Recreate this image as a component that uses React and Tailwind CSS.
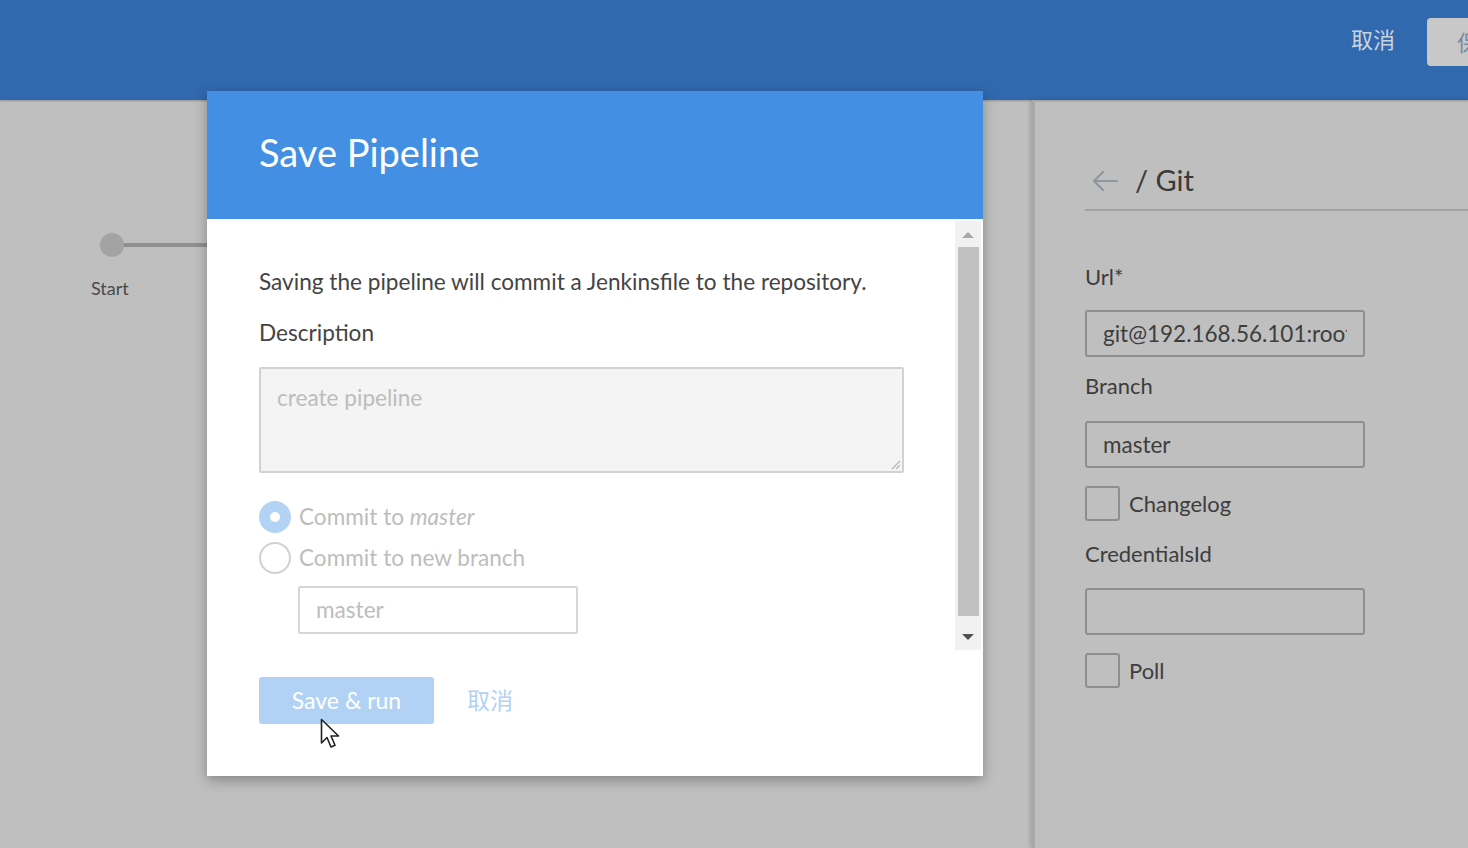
import React from 'react';

function Checkbox({ label }) {
  return (
    <label className="flex items-center gap-[9px]">
      <span className="h-[35px] w-[35px] rounded-[3px] border-2 border-[#8e8e8e]" />
      <span className="text-[22px] text-[#3d3d3d]">{label}</span>
    </label>
  );
}

function Field({ value }) {
  return (
    <div className="flex h-[47px] w-[280px] items-center rounded-[3px] border-2 border-[#8e8e8e] px-[16px] text-[22.5px] text-[#3d3d3d]">
      <span className="overflow-hidden whitespace-nowrap">{value}</span>
    </div>
  );
}

function Cursor() {
  return (
    <svg width="22" height="32" viewBox="0 0 22 32" className="absolute left-[320px] top-[718px]">
      <path d="M1.5 1.5 L1.5 25 L7 19.5 L11 29 L15 27.3 L11 18 L18.5 18 Z" fill="#fff" stroke="#222" strokeWidth="1.6" strokeLinejoin="round" />
    </svg>
  );
}

export default function App() {
  return (
    <div className="relative h-[848px] w-[1468px] overflow-hidden bg-[#bfbfbf] font-['Lato','Noto_Sans_CJK_SC',sans-serif]">
      <header className="flex h-[100px] items-start justify-end bg-[#3169ae] pt-[18px] shadow-[0_1px_2px_rgba(0,0,0,0.25)]">
        <span className="mr-[32px] mt-[5px] text-[22px] text-[#c9d3e0]">取消</span>
        <div className="flex h-[48px] w-[41px] items-center overflow-hidden rounded-l-[4px] bg-[#c8c8c8] pl-[30px] text-[22px] text-[#7a8ba0]">保</div>
      </header>

      <div className="flex h-[748px]">
        <div className="relative flex-1">
          <div className="absolute left-[100px] top-[133px] flex items-center">
            <span className="h-[24px] w-[24px] rounded-full bg-[#a3a3a3]" />
            <span className="h-[4px] w-[100px] bg-[#8f8f8f]" />
          </div>
          <span className="absolute left-[91px] top-[175px] text-[18px] text-[#4a4a4a]">Start</span>
        </div>

        <aside className="w-[436px] border-l-[3px] border-[#a9a9a9] pl-[50px] shadow-[-2px_0_4px_rgba(0,0,0,0.15)]">
          <div className="mt-[52px] flex h-[59px] items-start gap-[16px] border-b-2 border-[#a2a2a2] pl-[6px] pt-[10px]">
            <svg width="28" height="24" viewBox="0 0 28 24" fill="none" stroke="#8f96a0" strokeWidth="2.2" strokeLinecap="round" strokeLinejoin="round" className="mt-[7px]">
              <path d="M26 12 H3 M12 3 L3 12 L12 21" />
            </svg>
            <span className="text-[29px] leading-[36px] text-[#3a3a3a]">/ Git</span>
          </div>
          <div className="mt-[49px] text-[22px] text-[#3d3d3d]">Url*</div>
          <div className="mt-[17px]"><Field value="git@192.168.56.101:root/test.git" /></div>
          <div className="mt-[12px] text-[22px] text-[#3d3d3d]">Branch</div>
          <div className="mt-[19px]"><Field value="master" /></div>
          <div className="mt-[18px]"><Checkbox label="Changelog" /></div>
          <div className="mt-[16px] text-[22px] text-[#3d3d3d]">CredentialsId</div>
          <div className="mt-[18px]"><Field value="" /></div>
          <div className="mt-[18px]"><Checkbox label="Poll" /></div>
        </aside>
      </div>

      <div className="absolute left-[207px] top-[91px] flex h-[685px] w-[776px] flex-col bg-white shadow-[0_4px_12px_rgba(0,0,0,0.3)]">
        <div className="flex h-[128px] items-center bg-[#428fe3] pb-[6px] pl-[52px] text-[38px] text-white">Save Pipeline</div>
        <div className="flex flex-1">
          <div className="flex-1 pl-[52px] pt-[49px] text-[22.6px] text-[#444]">
            <p className="leading-[28px]">Saving the pipeline will commit a Jenkinsfile to the repository.</p>
            <p className="mt-[23px] leading-[28px]">Description</p>
            <div className="relative mt-[20px] h-[106px] w-[645px] rounded-[2px] border-2 border-[#d2d2d2] bg-[#f4f4f4] px-[16px] pt-[12px] text-[#bdbdbd]">
              create pipeline
              <svg width="12" height="12" viewBox="0 0 12 12" className="absolute bottom-[1px] right-[1px]">
                <path d="M11 3 L3 11 M11 7 L7 11" stroke="#b5b5b5" strokeWidth="1.2" />
              </svg>
            </div>
            <div className="mt-[28px] flex h-[32px] items-center gap-[8px] text-[#bdbdbd]">
              <span className="flex h-[32px] w-[32px] items-center justify-center rounded-full bg-[#b2d3f5]">
                <span className="h-[10px] w-[10px] rounded-full bg-white" />
              </span>
              <span>Commit to <i>master</i></span>
            </div>
            <div className="mt-[9px] flex h-[32px] items-center gap-[8px] text-[#bdbdbd]">
              <span className="h-[32px] w-[32px] rounded-full border-2 border-[#d0d0d0]" />
              <span>Commit to new branch</span>
            </div>
            <div className="ml-[39px] mt-[12px] flex h-[48px] w-[280px] items-center rounded-[2px] border-2 border-[#d6d6d6] px-[16px] text-[#bdbdbd]">
              master
            </div>
            <div className="mt-[43px] flex items-center gap-[33px]">
              <span className="flex h-[47px] w-[175px] items-center justify-center rounded-[3px] bg-[#b1d2f4] text-[23px] text-white">Save &amp; run</span>
              <span className="text-[23px] text-[#b1d2f4]">取消</span>
            </div>
          </div>
          <div className="mt-[2px] flex h-[429px] w-[26px] flex-col items-center bg-[#f1f1f1]">
            <svg width="12" height="8" viewBox="0 0 12 8" className="mt-[10px]"><path d="M0 7 L6 1 L12 7 Z" fill="#a8a8a8" /></svg>
            <div className="mt-[8px] w-[21px] flex-1 bg-[#c1c1c1]" />
            <svg width="12" height="8" viewBox="0 0 12 8" className="mb-[9px] mt-[17px]"><path d="M0 1 L12 1 L6 7 Z" fill="#505050" /></svg>
          </div>
          <div className="w-[2px]" />
        </div>
      </div>

      <Cursor />
    </div>
  );
}
